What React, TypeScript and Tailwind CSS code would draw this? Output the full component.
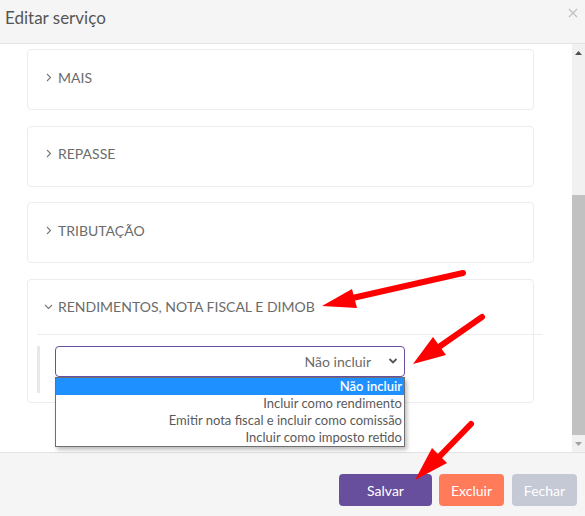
import React from "react";

const sections = ["MAIS", "REPASSE", "TRIBUTAÇÃO"];

const options = [
  "Não incluir",
  "Incluir como rendimento",
  "Emitir nota fiscal e incluir como comissão",
  "Incluir como imposto retido",
];

const Chevron = ({ open }: { open?: boolean }) => (
  <svg width="9" height="9" viewBox="0 0 9 9" fill="none" className="shrink-0">
    {open ? (
      <path d="M1 3l3.5 3.5L8 3" stroke="#777" strokeWidth="1.1" />
    ) : (
      <path d="M3 1l3.5 3.5L3 8" stroke="#777" strokeWidth="1.1" />
    )}
  </svg>
);

const App: React.FC = () => {
  return (
    <div
      className="relative w-[585px] h-[516px] flex flex-col bg-white overflow-hidden"
      style={{ fontFamily: "Lato, 'Open Sans', sans-serif" }}
    >
      {/* Header */}
      <div className="h-[44px] shrink-0 flex items-start justify-between bg-[#f5f5f5] border-b border-[#e3e3e3]">
        <span className="pl-[5px] pt-[5px] text-[17px] text-[#555]">Editar serviço</span>
        <svg width="10" height="10" viewBox="0 0 10 10" className="mr-[7px] mt-[8px]">
          <path d="M1 1l8 8M9 1l-8 8" stroke="#c2c2c2" strokeWidth="1.4" />
        </svg>
      </div>

      {/* Body */}
      <div className="flex-1 flex min-h-0">
        <div className="flex-1 pl-[27px] pr-[38px] pt-[5px] flex flex-col gap-[15.67px]">
          {sections.map((s) => (
            <div key={s} className="h-[61px] rounded-[4px] border border-[#ececf1]">
              <div className="h-[54px] flex items-center gap-[5px] pl-[16px] text-[14px] text-[#6b6b6b]">
                <Chevron />
                <span>{s}</span>
              </div>
            </div>
          ))}

          <div className="h-[124px] rounded-[4px] border border-[#ececf1]">
            <div className="h-[54px] flex items-center gap-[5px] pl-[16px] text-[14px] text-[#6b6b6b]">
              <Chevron open />
              <span>RENDIMENTOS, NOTA FISCAL E DIMOB</span>
            </div>
            <div className="h-px bg-[#ececf1] ml-[9px] mr-[-10px]" />
            <div className="flex pt-[11px] pl-[9px]">
              <div className="w-[3px] h-[47px] bg-[#e8e8e8]" />
              <div className="relative ml-[15px] w-[350px] h-[31px] rounded-[4px] border border-[#6a4fa0] flex items-center justify-end pr-[6px] gap-[17px] text-[14px] text-[#6b6b6b]">
                <span>Não incluir</span>
                <svg width="10" height="8" viewBox="0 0 10 8" fill="none">
                  <path d="M1.5 2l3.5 3.5L8.5 2" stroke="#555" strokeWidth="1.8" />
                </svg>
                {/* open dropdown list */}
                <div className="absolute left-[-1px] top-[30px] w-[350px] border border-[#6f6f6f] bg-white shadow-[2px_3px_4px_rgba(0,0,0,0.25)] z-10">
                  {options.map((o, i) => (
                    <div
                      key={o}
                      className={
                        i === 0
                          ? "h-[17px] leading-[17px] text-right pr-[2px] text-[13px] bg-[#1e90ff] text-white font-semibold"
                          : "h-[17px] leading-[17px] text-right pr-[2px] text-[13px] text-[#5a5a5a]"
                      }
                    >
                      {o}
                    </div>
                  ))}
                </div>
              </div>
            </div>
          </div>
        </div>

        {/* Scrollbar */}
        <div className="w-[13px] shrink-0 bg-[#f1f1f1] flex flex-col items-center">
          <div className="h-[17px] flex items-center">
            <svg width="7" height="4" viewBox="0 0 7 4">
              <path d="M0 4L3.5 0L7 4z" fill="#505050" />
            </svg>
          </div>
          <div className="h-[134px]" />
          <div className="w-[13px] h-[240px] bg-[#c1c1c1]" />
          <div className="h-[17px] flex items-center">
            <svg width="7" height="4" viewBox="0 0 7 4">
              <path d="M0 0L7 0L3.5 4z" fill="#a3a3a3" />
            </svg>
          </div>
        </div>
      </div>

      {/* Footer */}
      <div className="h-[64px] shrink-0 bg-[#f5f5f5] border-t border-[#e3e3e3] flex items-start justify-end gap-[7px] pr-[8px] pt-[21px]">
        <button className="w-[93px] h-[32px] rounded-[4px] bg-[#674f9e] text-white text-[14px]">Salvar</button>
        <button className="w-[65px] h-[32px] rounded-[4px] bg-[#ff7b5a] text-white text-[14px]">Excluir</button>
        <button className="w-[65px] h-[32px] rounded-[4px] bg-[#c5c9d5] text-white text-[14px] ml-[1px]">Fechar</button>
      </div>

      {/* Red annotation arrows */}
      <svg className="absolute inset-0 pointer-events-none z-20" width="585" height="516" viewBox="0 0 585 516">
        <g stroke="#ff0000" strokeWidth="6" strokeLinecap="round" fill="none">
          <line x1="463" y1="273" x2="348" y2="299" />
          <line x1="482" y1="317" x2="436" y2="349" />
          <line x1="471" y1="424" x2="437" y2="459" />
        </g>
        <g fill="#ff0000">
          <polygon points="322,306 352,289 357,308" />
          <polygon points="413,364 433,337 446,355" />
          <polygon points="415,480 432,448 447,463" />
        </g>
      </svg>
    </div>
  );
};

export default App;
